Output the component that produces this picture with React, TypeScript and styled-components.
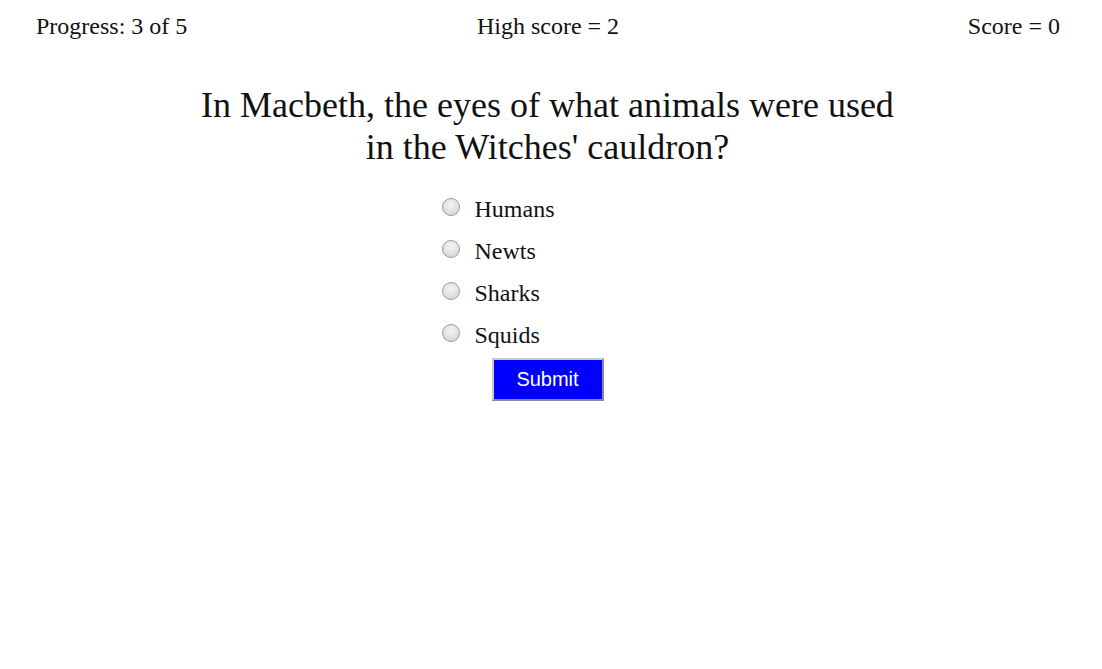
import React from 'react';
import styled, { createGlobalStyle } from 'styled-components';

const GlobalStyle = createGlobalStyle`
  body {
    margin: 0;
    background: #ffffff;
    font-family: "Liberation Serif", "Times New Roman", serif;
    color: #111;
  }
`;

const Page = styled.div`
  width: 1095px;
  display: flex;
  flex-direction: column;
  align-items: center;
`;

const Header = styled.div`
  align-self: stretch;
  display: grid;
  grid-template-columns: 1fr auto 1fr;
  padding: 13px 35px 0 36px;
  font-size: 24px;
  line-height: 26px;
`;

const HeaderItem = styled.div<{ $align: string }>`
  text-align: ${(p) => p.$align};
`;

const Question = styled.h2`
  margin: 45px 0 0;
  width: 700px;
  text-align: center;
  font-weight: normal;
  font-size: 36px;
  line-height: 42px;
`;

const Options = styled.div`
  width: 212px;
  margin-top: 29px;
  display: flex;
  flex-direction: column;
  gap: 18px;
`;

const OptionRow = styled.label`
  display: flex;
  align-items: center;
  gap: 15px;
  font-size: 24px;
  line-height: 24px;
  cursor: pointer;
`;

const Radio = styled.input`
  appearance: none;
  margin: 0;
  width: 18px;
  height: 18px;
  border-radius: 50%;
  border: 1px solid #9a9a9a;
  background: radial-gradient(circle at 50% 35%, #f4f4f4 0%, #e2e2e2 55%, #cfcfcf 100%);
  position: relative;
  top: -2px;
`;

const SubmitButton = styled.button`
  margin-top: 11px;
  width: 112px;
  height: 43px;
  background: #0000ff;
  color: #ffffff;
  font-family: "Liberation Sans", Arial, sans-serif;
  font-size: 20px;
  border: 2px solid;
  border-color: #c8c8c8 #8a8a8a #8a8a8a #c8c8c8;
  cursor: pointer;
`;

const answers = ['Humans', 'Newts', 'Sharks', 'Squids'];

export default function App() {
  return (
    <Page>
      <GlobalStyle />
      <Header>
        <HeaderItem $align="left">Progress: 3 of 5</HeaderItem>
        <HeaderItem $align="center">High score = 2</HeaderItem>
        <HeaderItem $align="right">Score = 0</HeaderItem>
      </Header>
      <Question>
        In Macbeth, the eyes of what animals were used in the Witches' cauldron?
      </Question>
      <Options>
        {answers.map((a) => (
          <OptionRow key={a}>
            <Radio type="radio" name="answer" value={a} />
            {a}
          </OptionRow>
        ))}
      </Options>
      <SubmitButton>Submit</SubmitButton>
    </Page>
  );
}
